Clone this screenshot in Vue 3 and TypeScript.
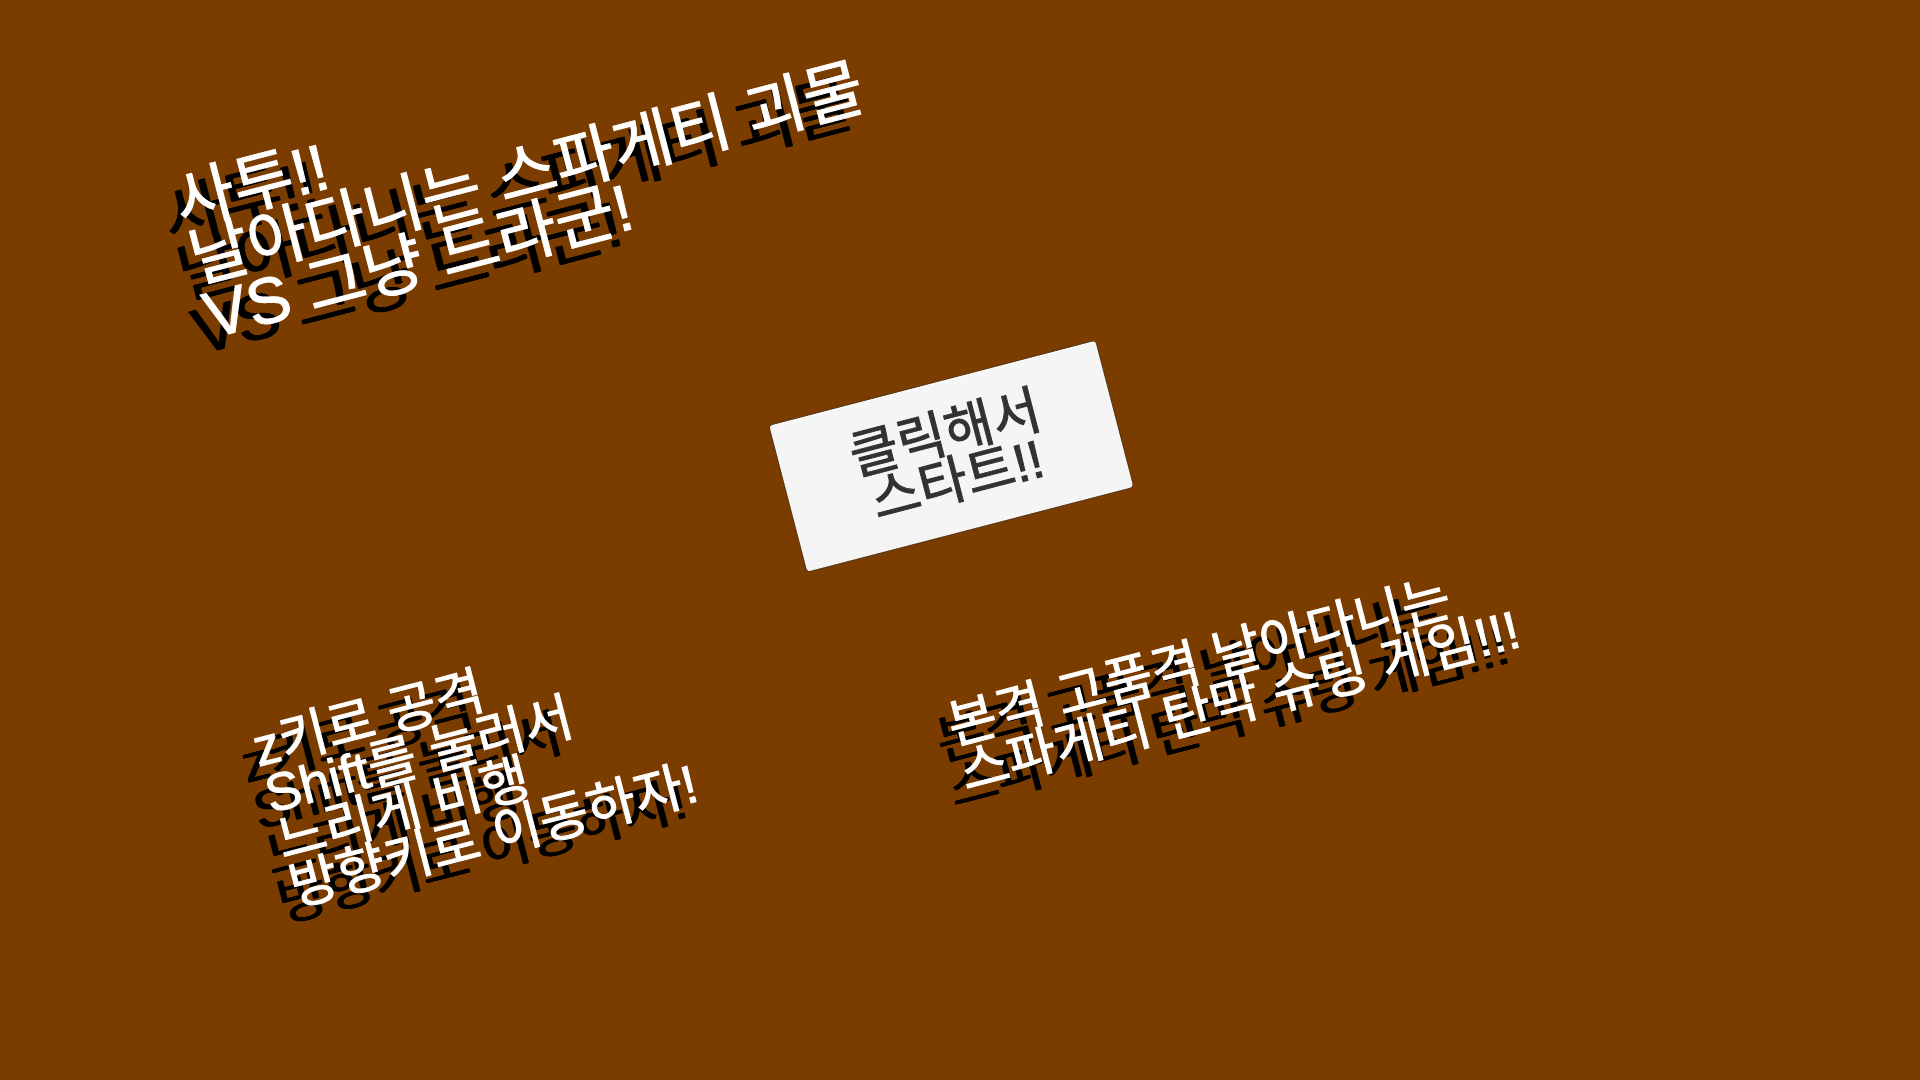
<script setup lang="ts">
import { ref } from 'vue'

const title: string[] = ['사투!!', '날아다니는 스파게티 괴물', 'VS 그냥 드라군!']
const controls: string[] = ['z키로 공격', 'Shift를 눌러서', '느리게 비행', '방향키로 이동하자!']
const slogan: string[] = ['본격 고품격 날아다니는', '스파게티 탄막 슈팅 게임!!!']
const startLabel: string[] = ['클릭해서', '스타트!!']

const started = ref(false)
</script>

<template>
  <main class="screen">
    <h1 class="tilted title">
      <span v-for="line in title" :key="line" class="line">{{ line }}</span>
    </h1>

    <button type="button" class="tilted start" :aria-pressed="started" @click="started = true">
      <span v-for="line in startLabel" :key="line" class="line">{{ line }}</span>
    </button>

    <div class="captions">
      <p class="tilted caption controls">
        <span v-for="line in controls" :key="line" class="line">{{ line }}</span>
      </p>
      <p class="tilted caption slogan">
        <span v-for="line in slogan" :key="line" class="line">{{ line }}</span>
      </p>
    </div>
  </main>
</template>

<style>
body {
  margin: 0;
  background: #7b3c00;
}
</style>

<style scoped>
.screen {
  box-sizing: border-box;
  display: flex;
  flex-direction: column;
  align-items: flex-start;
  min-height: 100vh;
  padding-top: 16.4vh;
  overflow: hidden;
  background: #7b3c00;
  color: #fff;
  font-family: "Liberation Sans", "Noto Sans CJK KR", sans-serif;
  font-weight: 400;
}

.tilted {
  transform: rotate(-14.6deg);
  transform-origin: 0 0;
  white-space: nowrap;
  -webkit-text-stroke: 1px currentColor;
}

.line {
  display: block;
}

.title,
.caption {
  text-shadow: -15px 13px 0 #000, -14px 13px 0 #000, -16px 13px 0 #000;
}

.title {
  margin: 0 0 0 8.8%;
  font-size: 65px;
  line-height: 58px;
  font-weight: 400;
}

.start {
  width: 339px;
  height: 153px;
  margin: 6.8vh 0 0 40%;
  padding: 0;
  border: 1px solid rgba(50, 50, 50, 0.5);
  border-radius: 5px;
  background: #f5f5f5;
  background-clip: padding-box;
  box-shadow: inset 0 1px 0 #fff;
  color: #323232;
  font-family: inherit;
  font-size: 53px;
  font-weight: 400;
  line-height: 48px;
  text-align: center;
  cursor: pointer;
}

.captions {
  display: grid;
  grid-template-columns: 41.6% 1fr;
  align-items: start;
  align-self: stretch;
  margin: 11.7vh 0 0 12.9%;
}

.caption {
  margin: 0;
  font-size: 53px;
  line-height: 48px;
}

.controls {
  margin-top: 2vh;
}
</style>
